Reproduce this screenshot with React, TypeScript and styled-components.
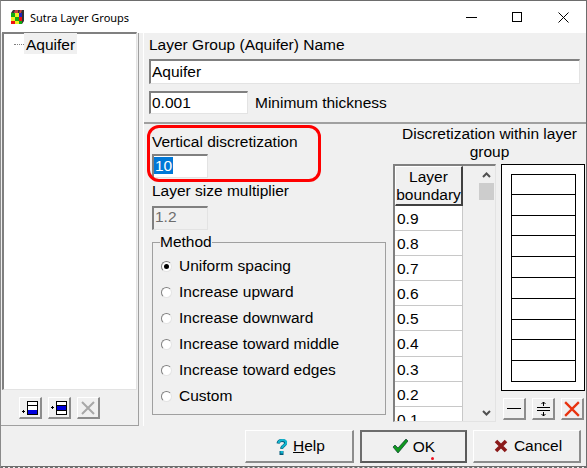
import styled, { createGlobalStyle } from 'styled-components'
import type { ReactNode } from 'react'

const GlobalStyle = createGlobalStyle`
  html, body {
    margin: 0;
    padding: 0;
    background: #f0f0f0;
  }
  * {
    box-sizing: border-box;
  }
`

const Window = styled.div`
  width: 587px;
  height: 468px;
  overflow: hidden;
  display: flex;
  flex-direction: column;
  background: #f0f0f0;
  border-top: 1px solid #6d6d6d;
  border-right: 1px solid #6d6d6d;
  border-bottom: 1px dashed #6d6d6d;
  border-left: 1px solid #8a8a8a;
  font-family: 'Liberation Sans', Arial, sans-serif;
  font-size: 15.5px;
  color: #000;
`

const TitleBar = styled.div`
  height: 32px;
  flex: none;
  display: flex;
  align-items: center;
  background: #fff;
  padding-left: 9px;
`

const TitleText = styled.span`
  margin-left: 4px;
  font-family: 'Noto Sans', 'Open Sans', sans-serif;
  font-size: 11px;
  flex: 1;
`

const WinButton = styled.div`
  width: 46px;
  height: 32px;
  display: flex;
  align-items: center;
  justify-content: center;
`

const Main = styled.div`
  flex: none;
  height: 393px;
  display: flex;
`

const LeftPane = styled.div`
  width: 138px;
  flex: none;
  display: flex;
  flex-direction: column;
  border-bottom: 1px solid #a0a0a0;
  border-right: 1px solid #a0a0a0;
`

const Tree = styled.div`
  height: 358px;
  margin: -1px 1px 0;
  background: #fff;
  border-top: 2px solid #808080;
  border-left: 2px solid #808080;
  border-right: 1px solid #e3e3e3;
  border-bottom: 1px solid #e3e3e3;
  display: flex;
  align-items: flex-start;
  padding-left: 10px;
`

const TreeDots = styled.span`
  width: 10px;
  margin-top: 10px;
  border-top: 1px dotted #808080;
`

const TreeLabel = styled.span`
  background: #f0f0f0;
  height: 21px;
  margin-top: -1px;
  line-height: 23px;
  padding: 0 2px;
`

const IconRow = styled.div`
  display: flex;
  gap: 6px;
  padding: 7px 0 0 18px;
`

const SquareButton = styled.div`
  width: 23px;
  height: 22px;
  display: flex;
  align-items: center;
  justify-content: center;
  background: #f0f0f0;
  border-top: 1px solid #fff;
  border-left: 1px solid #fff;
  border-right: 2px solid #8c8c8c;
  border-bottom: 2px solid #8c8c8c;
`

const RightPane = styled.div`
  flex: 1;
  margin-left: 4px;
  border-left: 1px solid #fff;
  display: flex;
  flex-direction: column;
  min-width: 0;
`

const NameSection = styled.div`
  height: 91px;
  flex: none;
  border-bottom: 2px solid #a0a0a0;
  padding: 2px 0 0 5px;
  display: flex;
  flex-direction: column;
`

const Label = styled.div`
  line-height: 20px;
  height: 20px;
`

const TextBox = styled.div<{ $width: number; $disabled?: boolean; $height?: number }>`
  width: ${(p) => p.$width}px;
  height: ${(p) => p.$height ?? 24}px;
  line-height: 20px;
  padding-left: 1px;
  flex: none;
  background: ${(p) => (p.$disabled ? '#f0f0f0' : '#fff')};
  color: ${(p) => (p.$disabled ? '#6d6d6d' : '#000')};
  border-top: 2px solid #808080;
  border-left: 2px solid #808080;
  border-right: 1px solid #e3e3e3;
  border-bottom: 1px solid #e3e3e3;
`

const NameInput = styled(TextBox)`
  margin-top: 4px;
  line-height: 21px;
`

const ThicknessRow = styled.div`
  display: flex;
  align-items: center;
  gap: 7px;
  margin-top: 7px;
`

const LowerSection = styled.div`
  flex: 1;
  display: flex;
  min-height: 0;
`

const OptionsColumn = styled.div`
  width: 245px;
  flex: none;
  padding: 8px 0 0 8px;
  display: flex;
  flex-direction: column;
  position: relative;
`

const Highlight = styled.div`
  position: absolute;
  left: 3px;
  top: 1px;
  width: 174px;
  height: 57px;
  border: 3px solid #f00;
  border-radius: 12px;
`

const SelectedValue = styled.span`
  display: block;
  width: 19px;
  height: 17px;
  margin: 1px 0 0 -1px;
  padding-left: 1px;
  line-height: 17px;
  background: #0078d7;
  color: #fff;
`

const DiscretizationInput = styled(TextBox)`
  margin-top: 2px;
`

const OptionLabel = styled(Label)`
  margin-top: 3px;
`

const MultiplierInput = styled(TextBox)`
  margin-top: 5px;
  line-height: 18px;
`

const MethodBox = styled.fieldset`
  margin: 4px 0 0;
  padding: 3px 0 0 8px;
  width: 234px;
  height: 181px;
  border: 1px solid #a0a0a0;
  min-inline-size: 0;

  legend {
    padding: 0;
    margin-left: -1px;
    line-height: 16px;
    height: 16px;
  }
`

const RadioRow = styled.div`
  display: flex;
  align-items: center;
  height: 26px;
  gap: 7px;
`

const RadioDot = styled.span<{ $checked?: boolean }>`
  width: 11px;
  height: 11px;
  border-radius: 50%;
  background: #fff;
  border: 1px solid #e4e4e4;
  border-top-color: #808080;
  border-left-color: #808080;
  display: flex;
  align-items: center;
  justify-content: center;

  &::after {
    content: '';
    display: ${(p) => (p.$checked ? 'block' : 'none')};
    width: 5px;
    height: 5px;
    border-radius: 50%;
    background: #000;
  }
`

const DiscretizationColumn = styled.div`
  flex: 1;
  display: flex;
  flex-direction: column;
  min-width: 0;
`

const ColumnTitle = styled.div`
  height: 40px;
  flex: none;
  padding: 1px 5px 0 9px;
  line-height: 18px;
  text-align: center;
  white-space: nowrap;
`

const ColumnBody = styled.div`
  flex: 1;
  display: flex;
  min-height: 0;
`

const GridBox = styled.div`
  width: 103px;
  height: 258px;
  flex: none;
  margin-left: 4px;
  display: flex;
  background: #f0f0f0;
  border-top: 2px solid #808080;
  border-left: 2px solid #808080;
  border-right: 1px solid #e3e3e3;
  border-bottom: 1px solid #e3e3e3;
  overflow: hidden;
`

const GridTable = styled.div`
  width: 68px;
  flex: none;
  display: flex;
  flex-direction: column;
`

const GridHeader = styled.div`
  height: 40px;
  flex: none;
  text-align: center;
  line-height: 18px;
  padding-top: 1px;
  border-right: 2px solid #404040;
  border-bottom: 2px solid #404040;
  border-top: 1px solid #fff;
  border-left: 1px solid #fff;
  white-space: nowrap;
`

const GridCell = styled.div`
  height: 25.1px;
  flex: none;
  background: #fff;
  line-height: 25px;
  padding-left: 2px;
  border-bottom: 1px solid #c8c8c8;
  border-right: 1px solid #c8c8c8;
`

const ScrollBar = styled.div`
  width: 15px;
  margin-left: 16px;
  flex: none;
  display: flex;
  flex-direction: column;
  align-items: center;
`

const ScrollArrow = styled.div`
  height: 17px;
  flex: none;
  display: flex;
  align-items: center;
  justify-content: center;
`

const ScrollThumb = styled.div`
  width: 15px;
  height: 17px;
  flex: none;
  background: #cdcdcd;
`

const ScrollTrack = styled.div`
  flex: 1;
`

const PreviewColumn = styled.div`
  width: 84px;
  flex: none;
  margin-left: 5px;
  display: flex;
  flex-direction: column;
`

const Preview = styled.div`
  height: 227px;
  flex: none;
  background: #fff;
  border: 1px solid #000;
  padding: 9px 9px 0;
`

const PreviewStack = styled.div`
  width: 65px;
  height: 20.8px;
  border: 1px solid #000;
  border-top: none;

  &:first-child {
    border-top: 1px solid #000;
  }
`

const PreviewButtons = styled.div`
  display: flex;
  gap: 6px;
  margin: 7px 0 0 2px;
`

const Footer = styled.div`
  flex: 1;
  display: flex;
  gap: 6px;
  padding: 4px 0 0 244px;
  border-bottom: 1px solid #6d6d6d;
`

const DialogButton = styled.div<{ $width: number; $gap: number; $primary?: boolean }>`
  position: relative;
  width: ${(p) => p.$width}px;
  height: 33px;
  padding-left: ${(p) => (p.$primary ? 0 : 3)}px;
  display: flex;
  align-items: center;
  justify-content: center;
  gap: ${(p) => p.$gap}px;
  border-top: ${(p) => (p.$primary ? '2px solid #6d6d6d' : '1px solid #fff')};
  border-left: ${(p) => (p.$primary ? '2px solid #6d6d6d' : '1px solid #fff')};
  border-right: 2px solid ${(p) => (p.$primary ? '#5a5a5a' : '#8c8c8c')};
  border-bottom: 2px solid ${(p) => (p.$primary ? '#5a5a5a' : '#8c8c8c')};
`

const CursorDot = styled.span`
  position: absolute;
  left: 69px;
  bottom: 1px;
  width: 3px;
  height: 3px;
  border-radius: 50%;
  background: #f01020;
`

const AccessKey = styled.span`
  text-decoration: underline;
`

const methods = [
  'Uniform spacing',
  'Increase upward',
  'Increase downward',
  'Increase toward middle',
  'Increase toward edges',
  'Custom',
]

const boundaries = ['0.9', '0.8', '0.7', '0.6', '0.5', '0.4', '0.3', '0.2', '0.1']

const AppIcon = () => (
  <svg width="16" height="16" viewBox="0 0 16 16">
    <path d="M1 4h11v11H1z" fill="#e11" />
    <path d="M1 4h4v4H1z" fill="#1a1" />
    <path d="M5 4h4v4H5z" fill="#ee2" />
    <path d="M9 4h3v4H9z" fill="#22b" />
    <path d="M1 8h4v4H1z" fill="#ee2" />
    <path d="M5 8h4v4H5z" fill="#1a1" />
    <path d="M5 12h4v3H5z" fill="#ee2" />
    <path d="M9 12h3v3H9z" fill="#1a1" />
    <path d="M3 1h11v11l-2 3V4H1z" fill="#333" />
    <path d="M5 1h3v3H4zM10 1h2l-1 3H9z" fill="#c44" />
  </svg>
)

const AddBelowIcon = () => (
  <svg width="18" height="14" viewBox="0 0 18 14">
    <path d="M1 10.500h3M2.500 9v3" stroke="#000" />
    <rect x="6.500" y="0.500" width="10" height="13" fill="#fff" stroke="#000" />
    <path d="M6.500 4.500h10" stroke="#000" />
    <rect x="7" y="9" width="9" height="4" fill="#00d" />
  </svg>
)

const AddAboveIcon = () => (
  <svg width="18" height="14" viewBox="0 0 18 14">
    <path d="M1 6.500h3M2.500 5v3" stroke="#000" />
    <rect x="6.500" y="0.500" width="10" height="13" fill="#fff" stroke="#000" />
    <rect x="7" y="5" width="9" height="4" fill="#00d" />
    <path d="M6.500 4.500h10M6.500 9.500h10" stroke="#000" />
  </svg>
)

const CrossIcon = ({ color, size }: { color: string; size: number }) => (
  <svg width={size} height={size} viewBox="0 0 14 14">
    <path d="M1 1l12 12M13 1L1 13" stroke={color} strokeWidth="2" />
  </svg>
)

const SplitIcon = () => (
  <svg width="13" height="16" viewBox="0 0 13 16">
    <path d="M0 6.500h13M0 9.500h13" stroke="#000" />
    <path d="M6.500 1v4M6.500 11v4" stroke="#000" />
    <path d="M4.500 3l2-2 2 2M4.500 13l2 2 2-2" fill="none" stroke="#000" />
  </svg>
)

const HelpIcon = () => (
  <svg width="12" height="17" viewBox="0 0 12 17">
    <path
      d="M2.500 5C2.800 2.800 4.500 2 6.500 2c2.500 0 4 1.200 3.500 3.200-.4 1.500-2.300 2.200-3.200 3.200-.4.500-.6 1-.7 2"
      fill="none"
      stroke="#045a78"
      strokeWidth="3"
      transform="translate(-.5 .5)"
    />
    <path
      d="M2.500 5C2.800 2.800 4.500 2 6.500 2c2.500 0 4 1.200 3.500 3.200-.4 1.500-2.300 2.200-3.200 3.200-.4.500-.6 1-.7 2"
      fill="none"
      stroke="#12b5cf"
      strokeWidth="2.200"
    />
    <rect x="3.500" y="13" width="4" height="4" fill="#045a78" />
    <rect x="4.500" y="13" width="2.500" height="2.500" fill="#12b5cf" />
  </svg>
)

const CheckIcon = () => (
  <svg width="16" height="15" viewBox="0 0 16 15">
    <path d="M1 8l2-2 3 3 8-9 2 2-10 12z" fill="#0f9a1e" stroke="#0b3b2e" strokeWidth="0.700" />
  </svg>
)

const CancelIcon = () => (
  <svg width="14" height="14" viewBox="0 0 14 14">
    <path d="M2 2l10 10M12 2L2 12" stroke="#8b1a1a" strokeWidth="3.600" />
  </svg>
)

const Radio = ({ checked, children }: { checked?: boolean; children: ReactNode }) => (
  <RadioRow>
    <RadioDot $checked={checked} />
    <span>{children}</span>
  </RadioRow>
)

const App = () => {
  return (
    <Window>
      <GlobalStyle />
      <TitleBar>
        <AppIcon />
        <TitleText>Sutra Layer Groups</TitleText>
        <WinButton>
          <svg width="11" height="1" viewBox="0 0 11 1">
            <path d="M0 .5h11" stroke="#000" />
          </svg>
        </WinButton>
        <WinButton>
          <svg width="10" height="10" viewBox="0 0 10 10">
            <rect x=".5" y=".5" width="9" height="9" fill="none" stroke="#000" />
          </svg>
        </WinButton>
        <WinButton>
          <svg width="11" height="11" viewBox="0 0 11 11">
            <path d="M.5.5l10 10M10.500.5l-10 10" stroke="#000" />
          </svg>
        </WinButton>
      </TitleBar>
      <Main>
        <LeftPane>
          <Tree>
            <TreeDots />
            <TreeLabel>Aquifer</TreeLabel>
          </Tree>
          <IconRow>
            <SquareButton>
              <AddBelowIcon />
            </SquareButton>
            <SquareButton>
              <AddAboveIcon />
            </SquareButton>
            <SquareButton>
              <CrossIcon color="#a8a8a8" size={14} />
            </SquareButton>
          </IconRow>
        </LeftPane>
        <RightPane>
          <NameSection>
            <Label>Layer Group (Aquifer) Name</Label>
            <NameInput $width={431} $height={25}>
              Aquifer
            </NameInput>
            <ThicknessRow>
              <TextBox $width={99} $height={23}>
                0.001
              </TextBox>
              <span>Minimum thickness</span>
            </ThicknessRow>
          </NameSection>
          <LowerSection>
            <OptionsColumn>
              <Highlight />
              <Label>Vertical discretization</Label>
              <DiscretizationInput $width={56}>
                <SelectedValue>10</SelectedValue>
              </DiscretizationInput>
              <OptionLabel>Layer size multiplier</OptionLabel>
              <MultiplierInput $width={56} $disabled>
                1.2
              </MultiplierInput>
              <MethodBox>
                <legend>Method</legend>
                {methods.map((m, i) => (
                  <Radio key={m} checked={i === 0}>
                    {m}
                  </Radio>
                ))}
              </MethodBox>
            </OptionsColumn>
            <DiscretizationColumn>
              <ColumnTitle>
                Discretization within layer
                <br />
                group
              </ColumnTitle>
              <ColumnBody>
                <GridBox>
                  <GridTable>
                    <GridHeader>
                      Layer
                      <br />
                      boundary
                    </GridHeader>
                    {boundaries.map((b) => (
                      <GridCell key={b}>{b}</GridCell>
                    ))}
                  </GridTable>
                  <ScrollBar>
                    <ScrollArrow>
                      <svg width="9" height="6" viewBox="0 0 9 6">
                        <path d="M1 5l3.500-3.500L8 5" fill="none" stroke="#505050" strokeWidth="2" />
                      </svg>
                    </ScrollArrow>
                    <ScrollThumb />
                    <ScrollTrack />
                    <ScrollArrow>
                      <svg width="9" height="6" viewBox="0 0 9 6">
                        <path d="M1 1l3.500 3.500L8 1" fill="none" stroke="#505050" strokeWidth="2" />
                      </svg>
                    </ScrollArrow>
                  </ScrollBar>
                </GridBox>
                <PreviewColumn>
                  <Preview>
                    {Array.from({ length: 10 }, (_, i) => (
                      <PreviewStack key={i} />
                    ))}
                  </Preview>
                  <PreviewButtons>
                    <SquareButton>
                      <svg width="14" height="1" viewBox="0 0 14 1">
                        <path d="M0 .5h14" stroke="#000" />
                      </svg>
                    </SquareButton>
                    <SquareButton>
                      <SplitIcon />
                    </SquareButton>
                    <SquareButton>
                      <CrossIcon color="#e8320e" size={16} />
                    </SquareButton>
                  </PreviewButtons>
                </PreviewColumn>
              </ColumnBody>
            </DiscretizationColumn>
          </LowerSection>
        </RightPane>
      </Main>
      <Footer>
        <DialogButton $width={109} $gap={5}>
          <HelpIcon />
          <span>
            <AccessKey>H</AccessKey>elp
          </span>
        </DialogButton>
        <DialogButton $width={107} $gap={5} $primary>
          <CheckIcon />
          <span>OK</span>
          <CursorDot />
        </DialogButton>
        <DialogButton $width={108} $gap={6}>
          <CancelIcon />
          <span>Cancel</span>
        </DialogButton>
      </Footer>
    </Window>
  )
}

export default App
